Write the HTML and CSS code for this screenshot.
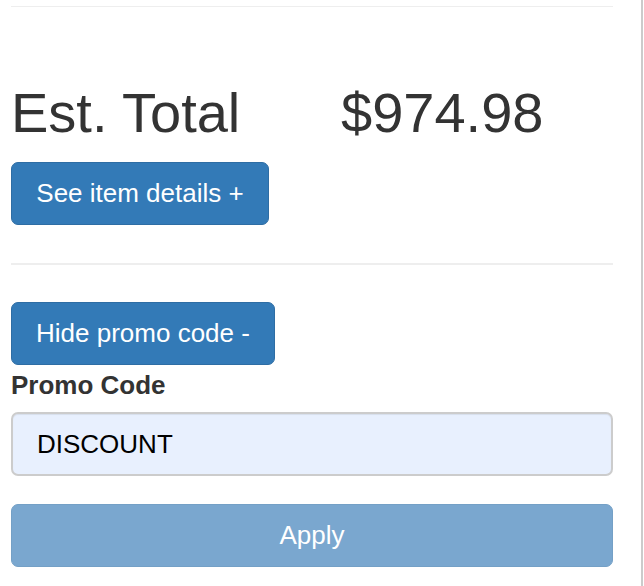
FILE: index.html
```html
<!DOCTYPE html>
<html lang="en">
<head>
<meta charset="utf-8">
<title>Checkout summary</title>
<link rel="stylesheet" href="styles.css">
</head>
<body>
<div class="page">
  <hr class="rule rule-top">
  <div class="total-row">
    <div class="total-label">Est. Total</div>
    <div class="total-value">$974.98</div>
  </div>
  <button class="btn btn-primary btn-details" type="button">See item details +</button>
  <hr class="rule rule-mid">
  <button class="btn btn-primary btn-promo" type="button">Hide promo code -</button>
  <form class="promo-form">
    <label class="promo-label" for="promo">Promo Code</label>
    <input class="promo-input" id="promo" type="text" value="DISCOUNT">
    <button class="btn btn-primary btn-apply" type="button" disabled>Apply</button>
  </form>
</div>
</body>
</html>
```

FILE: styles.css
```css
html, body {
  margin: 0;
  padding: 0;
  background: #ffffff;
}

body {
  font-family: "Liberation Sans", Arial, Helvetica, sans-serif;
  color: #333333;
}

.page {
  box-sizing: border-box;
  width: 643px;
  min-height: 586px;
  padding: 0 28px 0 11px;
  border-right: 2px solid #cbcbcb;
  display: flex;
  flex-direction: column;
  align-items: flex-start;
}

.rule {
  align-self: stretch;
  border: 0;
  margin: 0;
  height: 0;
}

.rule-top {
  margin-top: 6px;
  border-top: 1px solid #eeeeee;
}

.rule-mid {
  margin-top: 38px;
  border-top: 2px solid #eeeeee;
}

.total-row {
  display: flex;
  margin-top: 76px;
  font-size: 56px;
  line-height: 60px;
  color: #333333;
}

.total-label {
  width: 330px;
}

.btn {
  box-sizing: border-box;
  font-family: "Liberation Sans", Arial, Helvetica, sans-serif;
  font-size: 26px;
  line-height: 35px;
  height: 63px;
  padding: 13px 24px;
  border-radius: 7px;
  border: 1px solid #2e6da4;
  background: #337ab7;
  color: #ffffff;
  cursor: pointer;
}

.btn-details {
  margin-top: 19px;
  width: 258px;
}

.btn-promo {
  margin-top: 37px;
  width: 264px;
}

.promo-form {
  align-self: stretch;
  display: flex;
  flex-direction: column;
  margin: 0;
}

.promo-label {
  font-weight: bold;
  font-size: 26px;
  line-height: 36px;
  margin-top: 2px;
  color: #333333;
}

.promo-input {
  box-sizing: border-box;
  margin-top: 9px;
  height: 64px;
  width: 100%;
  padding: 0 24px;
  font-family: "Liberation Sans", Arial, Helvetica, sans-serif;
  font-size: 26px;
  color: #000000;
  background: #e8f0fe;
  border: 2px solid #cccccc;
  border-radius: 7px;
  box-shadow: inset 0 1px 1px rgba(0, 0, 0, 0.075);
  outline: none;
}

.btn-apply {
  margin-top: 28px;
  width: 100%;
  background: #7aa7cf;
  border-color: #74a0c6;
  cursor: not-allowed;
}
```
